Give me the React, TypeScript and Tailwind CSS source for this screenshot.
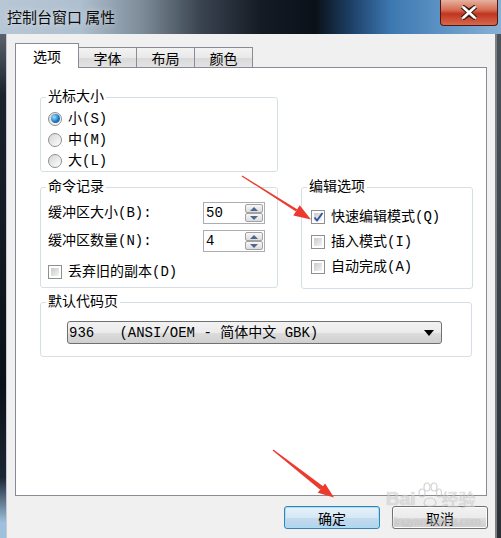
import React from "react";

function Radio({ checked, label }: { checked?: boolean; label: string }) {
  return (
    <div className="flex items-center h-[21px]">
      <span className="w-[14px] h-[14px] rounded-full border border-[#8e8f8f] bg-[linear-gradient(135deg,#d4d4d4,#ffffff)] flex items-center justify-center">
        {checked && (
          <span className="w-[9px] h-[9px] rounded-full bg-[radial-gradient(circle_at_35%_35%,#9ee0ff,#1a78c8_55%,#0b3f82)]" />
        )}
      </span>
      <span className="ml-[6px]">{label}</span>
    </div>
  );
}

function Check({ checked, label, h }: { checked?: boolean; label: string; h: string }) {
  return (
    <div className={"flex items-center " + h}>
      <span className="relative w-[14px] h-[14px] border border-[#8e8f8f] bg-white p-[2px] flex">
        <span className="flex-1 bg-[linear-gradient(135deg,#c9c9c9,#f4f4f4)]" />
        {checked && (
          <svg className="absolute left-[1px] top-[1px]" width="11" height="11" viewBox="0 0 11 11">
            <path d="M1.5 5.5 L4 8.5 L9.5 1" stroke="#2f4f9e" strokeWidth="1.8" fill="none" />
          </svg>
        )}
      </span>
      <span className="ml-[6px]">{label}</span>
    </div>
  );
}

function SpinBtn({ up }: { up?: boolean }) {
  return (
    <div className="flex-1 border border-[#a2a2a2] rounded-[2px] bg-[linear-gradient(#f7f7f7,#dcdcdc)] flex items-center justify-center">
      <svg width="8" height="4" viewBox="0 0 8 4">
        <path d={up ? "M0 4 L4 0 L8 4 Z" : "M0 0 L8 0 L4 4 Z"} fill="#4d6792" />
      </svg>
    </div>
  );
}

function Spin({ value }: { value: string }) {
  return (
    <div className="w-[62px] h-[22px] border border-[#abadb3] bg-white flex">
      <span className="flex-1 pl-[2px] leading-[20px]">{value}</span>
      <div className="w-[20px] flex flex-col p-[1px] gap-[0px]">
        <SpinBtn up />
        <SpinBtn />
      </div>
    </div>
  );
}

function Group({ title, className, children }: { title: string; className: string; children?: React.ReactNode }) {
  return (
    <div className={"relative border border-[#d5dfe5] rounded-[3px] " + className}>
      <span className="absolute left-[5px] -top-[11px] bg-white px-[2px] leading-[20px]">{title}</span>
      {children}
    </div>
  );
}

function Tab({ label, active }: { label: string; active?: boolean }) {
  if (active) {
    return (
      <div className="w-[64px] h-[25px] bg-white border border-b-0 border-[#898c95] flex items-center justify-center">
        {label}
      </div>
    );
  }
  return (
    <div className="w-[59px] h-[21px] -ml-px border border-[#898c95] bg-[linear-gradient(#f3f3f3,#e9e9e9_50%,#d9d9d9_51%,#e3e3e3)] flex items-center justify-center">
      {label}
    </div>
  );
}

export default function App() {
  return (
    <div className="relative w-[501px] h-[538px] overflow-hidden flex flex-col text-black">
      {/* title bar */}
      <div className="h-[34px] flex justify-between bg-[linear-gradient(90deg,#b8c7d5_0%,#aebfcf_16%,#7f8d9a_28%,#3a4450_40%,#141b25_52%,#0b1119_63%,#1d3f66_70%,#3c78b0_78%,#5d92c4_88%,#88b0d5_100%)]">
        <span className="pl-[7px] pt-[6px] text-[15px] leading-[22px] font-['Noto_Sans_CJK_SC',sans-serif] text-[#0b0b0b] [text-shadow:0_0_6px_rgba(255,255,255,0.6)]">
          控制台窗口 属性
        </span>
        <div className="mr-[3px] w-[58px] h-[26px] rounded-b-[4px] border border-t-0 border-[#4a1a12] bg-[linear-gradient(#e6b1a0,#d66c52_40%,#c03520_55%,#d8684c)] flex items-center justify-center">
          <svg width="20" height="15" viewBox="0 0 20 15">
            <path d="M3 1.5 L10 6 L17 1.5 M3 13.5 L10 9 L17 13.5" stroke="#3a1a14" strokeWidth="4.5" fill="none" />
            <path d="M3 1.5 L10 6 L17 1.5 M3 13.5 L10 9 L17 13.5" stroke="#ffffff" strokeWidth="2.6" fill="none" />
            <path d="M4 2 L16 13 M16 2 L4 13" stroke="#3a1a14" strokeWidth="4.5" />
            <path d="M4 2 L16 13 M16 2 L4 13" stroke="#ffffff" strokeWidth="2.6" />
          </svg>
        </div>
      </div>

      <div className="flex-1 flex">
        {/* left frame */}
        <div className="w-[7px] bg-[linear-gradient(#5a636c,#1a222c_12%,#0b1017_70%,#1b2634_88%,#9fc0dc_97%)] border-r border-[#c7cbcf]" />

        {/* client */}
        <div className="flex-1 bg-[#f0f0f0] pl-[8px] pr-[7px] pt-[9px] font-['Liberation_Mono','Noto_Sans_CJK_SC',monospace] text-[14px] leading-[20px]">
          <div className="flex items-end relative z-10 font-['Noto_Sans_CJK_SC',sans-serif]">
            <Tab label="选项" active />
            <Tab label="字体" />
            <Tab label="布局" />
            <Tab label="颜色" />
          </div>

          <div className="-mt-px w-[472px] h-[429px] bg-white border border-[#898c95] pl-[24px] pt-[29px] flex flex-col">
            <Group title="光标大小" className="w-[238px] h-[75px] pt-[10px] pl-[7px]">
              <Radio checked label="小(S)" />
              <Radio label="中(M)" />
              <Radio label="大(L)" />
            </Group>

            <div className="mt-[15px] flex gap-[23px] items-start">
              <Group title="命令记录" className="w-[238px] h-[101px] pt-[14px] pl-[7px]">
                <div className="flex items-center h-[22px]">
                  <span className="w-[155px]">缓冲区大小(B):</span>
                  <Spin value="50" />
                </div>
                <div className="flex items-center h-[22px] mt-[6px]">
                  <span className="w-[155px]">缓冲区数量(N):</span>
                  <Spin value="4" />
                </div>
                <div className="mt-[9px]">
                  <Check label="丢弃旧的副本(D)" h="h-[22px]" />
                </div>
              </Group>

              <Group title="编辑选项" className="w-[172px] h-[102px] pt-[16px] pl-[9px]">
                <Check checked label="快速编辑模式(Q)" h="h-[25px]" />
                <Check label="插入模式(I)" h="h-[25px]" />
                <Check label="自动完成(A)" h="h-[25px]" />
              </Group>
            </div>

            <Group title="默认代码页" className="mt-[13px] w-[432px] h-[55px] pt-[18px] pl-[26px]">
              <div className="w-[375px] h-[23px] rounded-[3px] border border-[#707070] bg-[linear-gradient(#f2f2f2,#ebebeb_50%,#dddddd_51%,#cfcfcf)] flex items-center justify-between pl-[1px] pr-[7px]">
                <span className="whitespace-pre">936   (ANSI/OEM - 简体中文 GBK)</span>
                <svg width="10" height="6" viewBox="0 0 10 6">
                  <path d="M0 0 L10 0 L5 6 Z" fill="#000" />
                </svg>
              </div>
            </Group>
          </div>

          <div className="mt-[10px] flex justify-end gap-[12px] font-['Noto_Sans_CJK_SC',sans-serif]">
            <button className="w-[96px] h-[23px] rounded-[3px] border border-[#3c7fb1] shadow-[inset_0_0_0_1px_#9fe2fb] bg-[linear-gradient(#e5f1f9,#d6e8f5_50%,#c2dcee_51%,#b6d3ea)] flex items-center justify-center">
              确定
            </button>
            <button className="w-[96px] h-[23px] rounded-[3px] border border-[#707070] shadow-[inset_0_0_0_1px_#fcfcfc] bg-[linear-gradient(#f2f2f2,#ebebeb_50%,#dddddd_51%,#cfcfcf)] flex items-center justify-center">
              取消
            </button>
          </div>
        </div>

        {/* right frame */}
        <div className="w-[6px] border-l-2 border-[#7b8086] bg-[linear-gradient(#4c535b,#2b3037)]" />
      </div>

      {/* baidu watermark */}
      <div className="absolute left-[386px] top-[482px] pointer-events-none opacity-60 font-['Liberation_Sans',sans-serif] text-[#d0d0d0] [text-shadow:0_0_1px_#9a9a9a]">
        <div className="flex items-end leading-[22px]">
          <span className="text-[19px] font-bold">Bai</span>
          <svg width="26" height="26" viewBox="0 0 26 26" className="mb-[2px]">
            <g fill="none" stroke="#b8b8b8" strokeWidth="1.2">
              <ellipse cx="6" cy="11" rx="3" ry="4" />
              <ellipse cx="11" cy="5" rx="3" ry="4" />
              <ellipse cx="18" cy="5" rx="3" ry="4" />
              <ellipse cx="23" cy="11" rx="2.5" ry="4" />
              <path d="M8 22 C8 14 20 14 20 22 C18 25 10 25 8 22 Z" />
            </g>
          </svg>
          <span className="text-[17px] font-['Noto_Sans_CJK_SC',sans-serif]">经验</span>
        </div>
        <div className="text-[11px] leading-[14px] mt-[4px] ml-[6px]">jingyan.baidu.com</div>
      </div>

      {/* red arrows */}
      <svg className="absolute inset-0 pointer-events-none" width="501" height="538" viewBox="0 0 501 538">
        <polygon points="241.7,176.4 242.3,175.6 297.5,209.6 295.5,211.2" fill="#ec3a2e" />
        <polygon points="311,219.5 293.3,215.5 299.7,205.3" fill="#ec3a2e" />
        <polygon points="272.6,450.4 273.4,449.6 323.4,486.5 320.2,489.7" fill="#ec3a2e" />
        <polygon points="334,497.5 317.7,492.8 325.1,483.4" fill="#ec3a2e" />
      </svg>
    </div>
  );
}
